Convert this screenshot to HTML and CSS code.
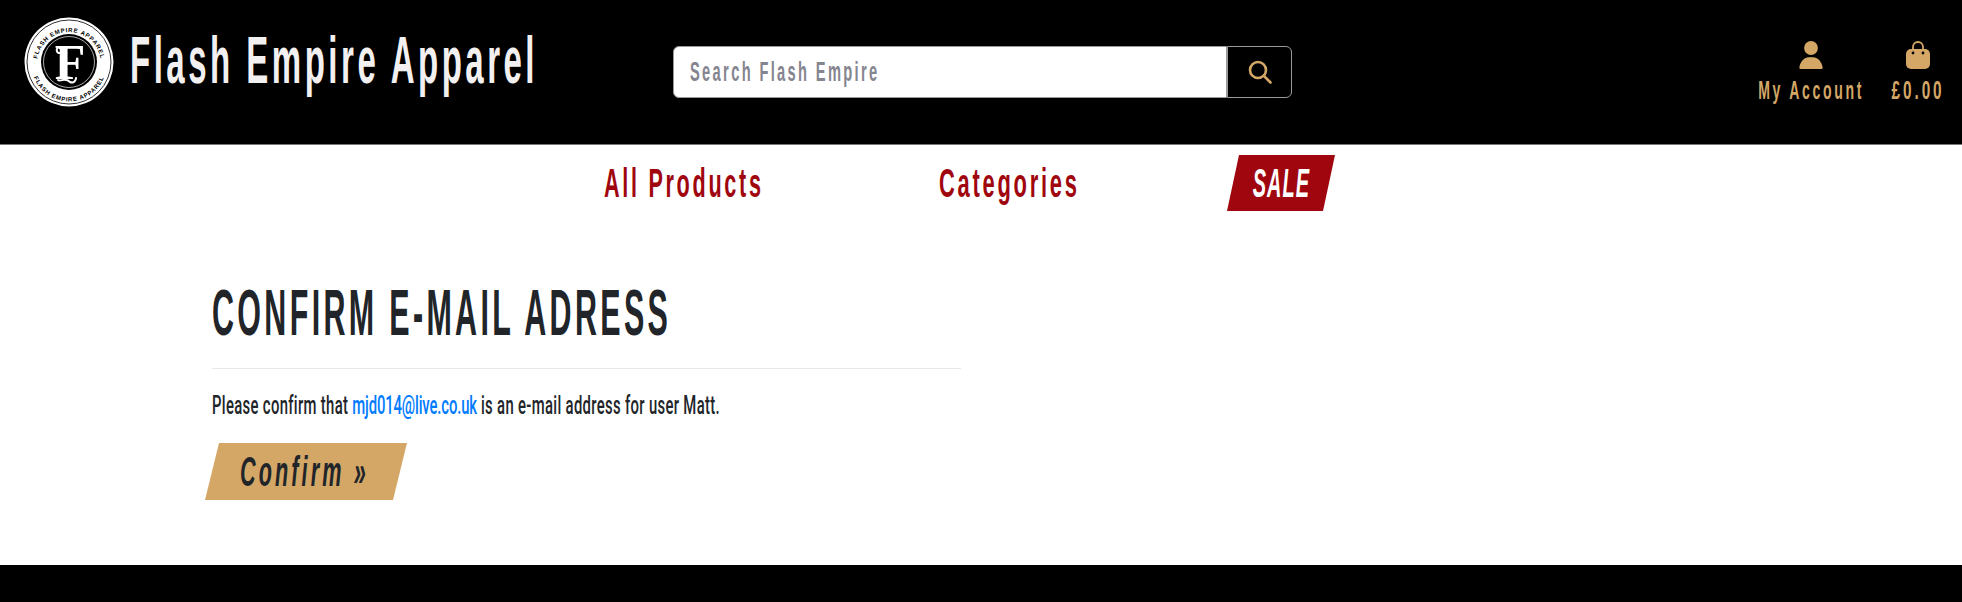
FILE: index.html
```html
<!DOCTYPE html>
<html>

<head>
    <title>Confirm E-mail Address</title>
    <link rel="stylesheet" href="styles.css">
</head>

<body>

    <header class="site-header">
        <a class="brand" href="#">
            <svg class="brand-logo" viewBox="0 0 90 90" width="90" height="90">
                <defs>
                    <path id="ring-top" d="M 13 47 A 32 32 0 0 1 77 47"></path>
                    <path id="ring-bottom" d="M 7.5 47 A 37.5 37.5 0 0 0 82.5 47"></path>
                </defs>
                <circle cx="45" cy="45" r="44.5" fill="#fff"></circle>
                <circle cx="45" cy="45" r="42" fill="none" stroke="#333" stroke-width="1"></circle>
                <circle cx="45" cy="45" r="28" fill="#000"></circle>
                <circle cx="45" cy="45" r="25.5" fill="none" stroke="#aaa" stroke-width="1"></circle>
                <text class="logo-ring"><textPath href="#ring-top" startOffset="50%" text-anchor="middle">FLASH EMPIRE APPAREL</textPath></text>
                <text class="logo-ring"><textPath href="#ring-bottom" startOffset="50%" text-anchor="middle">FLASH EMPIRE APPAREL</textPath></text>
                <text class="logo-letter" x="46" y="62" text-anchor="middle">F</text>
                <path class="logo-flourish" d="M37 32 C32 27 31 37 36 36 M34 63 C37 65 41 60 46 65 C50 67 52 63 52 61"></path>
            </svg>
            <span class="brand-name"><span class="squeeze">Flash Empire Apparel</span></span>
        </a>

        <form class="search">
            <div class="search-field">
                <input class="search-input" type="text" placeholder="Search Flash Empire">
            </div>
            <button class="search-btn" type="button">
                <svg viewBox="0 0 24 24" width="24" height="24" fill="none" stroke="#d4a767" stroke-width="2.6" stroke-linecap="round">
                    <circle cx="10" cy="10" r="8"></circle>
                    <path d="M16 16 L22.5 22.5"></path>
                </svg>
            </button>
        </form>

        <div class="header-links">
            <a class="header-link account-link" href="#">
                <svg viewBox="0 0 24 28" width="24" height="28" fill="#d4a767">
                    <circle cx="12" cy="7" r="6.9"></circle>
                    <path d="M1.5 28 H22.5 Q24 28 23.6 26 C22.5 20 18 16.3 14.5 16.3 H9.5 C6 16.3 1.5 20 .4 26 Q0 28 1.5 28 Z"></path>
                </svg>
                <span class="squeeze">My Account</span>
            </a>
            <a class="header-link basket-link" href="#">
                <svg viewBox="0 0 24 28" width="24" height="28">
                    <path d="M7 9 V6 A5 5 0 0 1 17 6 V9" fill="none" stroke="#d4a767" stroke-width="1.8"></path>
                    <rect y="8" width="24" height="20" rx="5" fill="#d4a767"></rect>
                    <circle cx="7" cy="12" r="1.4" fill="#000"></circle>
                    <circle cx="17" cy="12" r="1.4" fill="#000"></circle>
                </svg>
                <span class="squeeze">£0.00</span>
            </a>
        </div>
    </header>

    <nav class="main-nav">
        <a class="nav-link nav-products" href="#"><span class="squeeze">All Products</span></a>
        <a class="nav-link nav-categories" href="#"><span class="squeeze">Categories</span></a>
        <a class="nav-sale" href="#"><span class="squeeze">SALE</span></a>
    </nav>

    <main class="content">
        <h1 class="page-title"><span class="squeeze">CONFIRM E-MAIL ADRESS</span></h1>
        <hr class="title-rule">
        <p class="confirm-text"><span class="squeeze">Please confirm that <a href="#">mjd014@live.co.uk</a> is an e-mail address for user Matt.</span></p>
        <button class="confirm-btn" type="button"><span class="squeeze">Confirm »</span></button>
    </main>

    <footer class="site-footer"></footer>

</body>

</html>
```

FILE: styles.css
```css
* {
    box-sizing: border-box;
}

body {
    margin: 0;
    background-color: #fff;
    color: #212529;
    font-family: "Liberation Sans", sans-serif;
    font-weight: 700;
}

a {
    text-decoration: none;
}

/* no condensed font available, so text gets narrowed by hand */
.squeeze {
    display: inline-block;
    flex: none;
    white-space: nowrap;
    transform-origin: left center;
}

.site-header {
    display: flex;
    align-items: flex-start;
    height: 145px;
    background-color: #000;
    border-bottom: 1px solid #777;
}

.brand {
    display: flex;
    align-items: flex-start;
    flex: none;
    width: 673px;
    padding: 17px 0 0 24px;
}

.brand-logo {
    flex: none;
}

.logo-ring {
    font-size: 6px;
    font-weight: 700;
    letter-spacing: 0.8px;
    fill: #000;
}

.logo-letter {
    font-family: "Liberation Serif", serif;
    font-size: 50px;
    font-weight: 700;
    fill: #fff;
}

.logo-flourish {
    fill: none;
    stroke: #fff;
    stroke-width: 2;
    stroke-linecap: round;
}

.brand-name {
    width: 406px;
    margin: 6px 0 0 16px;
    color: #f2f0f0;
    font-size: 66px;
    line-height: 74px;
    letter-spacing: 7px;
}

.brand-name .squeeze {
    transform: scaleX(.5);
}

.search {
    display: flex;
    flex: none;
    width: 619px;
    height: 52px;
    margin-top: 46px;
}

.search-field {
    flex: 1;
    padding-left: 16px;
    overflow: hidden;
    background-color: #fff;
    border: 1px solid #999;
    border-radius: 6px 0 0 6px;
}

.search-input {
    display: block;
    width: 1020px;
    height: 100%;
    padding: 0;
    border: 0;
    outline: 0;
    background: transparent;
    font-family: inherit;
    font-size: 28px;
    font-weight: 700;
    letter-spacing: 4.5px;
    transform: scaleX(.523);
    transform-origin: left center;
}

.search-input::placeholder {
    color: #85858f;
    opacity: 1;
}

.search-btn {
    display: flex;
    align-items: center;
    justify-content: center;
    width: 65px;
    padding: 0;
    background-color: #000;
    border: 1px solid #999;
    border-radius: 0 6px 6px 0;
}

.header-links {
    display: flex;
    gap: 26px;
    margin-left: auto;
    padding: 41px 16px 0 0;
}

.header-link {
    display: flex;
    flex-direction: column;
    align-items: center;
    gap: 6px;
    color: #d4a767;
    font-size: 26px;
    line-height: 30px;
    letter-spacing: 5px;
}

.header-link .squeeze {
    transform-origin: center;
}

.account-link {
    width: 106px;
}

.account-link .squeeze {
    transform: scaleX(.54);
}

.basket-link {
    width: 56px;
}

.basket-link .squeeze {
    transform: scaleX(.59);
}

.main-nav {
    display: flex;
    align-items: center;
    height: 66px;
    padding: 10px 0 0 604px;
}

.nav-link {
    color: #a0060e;
    font-size: 40px;
    line-height: 45px;
    letter-spacing: 5px;
}

.nav-products .squeeze {
    transform: scaleX(.54);
}

.nav-categories .squeeze {
    transform: scaleX(.548);
}

.nav-products {
    width: 158px;
    margin-right: 177px;
}

.nav-categories {
    width: 139px;
    margin-right: 149px;
}

.nav-sale {
    display: flex;
    align-items: center;
    justify-content: center;
    width: 108px;
    height: 56px;
    background-color: #a0060e;
    color: #fff;
    font-size: 40px;
    font-style: italic;
    letter-spacing: 2px;
    clip-path: polygon(12px 0, 100% 0, calc(100% - 12px) 100%, 0 100%);
}

.nav-sale .squeeze {
    transform: scaleX(.5);
    transform-origin: center;
}

.content {
    width: 961px;
    padding: 66px 0 65px 212px;
}

.page-title {
    margin: 0;
    font-size: 64px;
    font-weight: 700;
    line-height: 72px;
    letter-spacing: 7px;
}

.page-title .squeeze {
    transform: scaleX(.476);
    transform-origin: left top;
}

.title-rule {
    margin: 19px 0 0;
    border: 0;
    border-top: 1px solid #e8e8e8;
}

.confirm-text {
    margin: 21px 0 0;
    font-family: Roboto, sans-serif;
    font-size: 26px;
    font-weight: 500;
    line-height: 30px;
    letter-spacing: .6px;
}

.confirm-text .squeeze {
    transform: scaleX(.57);
}

.confirm-text a {
    color: #007bff;
    letter-spacing: -.2px;
}

.confirm-btn {
    display: block;
    width: 202px;
    height: 57px;
    margin: 23px 0 0 -7px;
    padding: 0 0 0 35px;
    border: 0;
    background-color: #d4a767;
    color: #212529;
    font-family: inherit;
    font-size: 42px;
    font-style: italic;
    font-weight: 700;
    letter-spacing: 6px;
    text-align: left;
    clip-path: polygon(14px 0, 100% 0, calc(100% - 14px) 100%, 0 100%);
}

.confirm-btn .squeeze {
    transform: scaleX(.515);
}

.site-footer {
    height: 37px;
    background-color: #000;
}
```
